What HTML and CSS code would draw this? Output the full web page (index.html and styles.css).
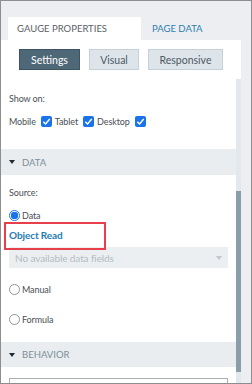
FILE: index.html
```html
<!DOCTYPE html>
<html lang="en">
<head>
    <meta charset="UTF-8">
    <link rel="stylesheet" href="styles.css">
</head>
<body>

<div class="frame">
    <!-- Pestañas -->
    <div class="tabs">
        <div class="tab active">Gauge Properties</div>
        <div class="tab">Page Data</div>
    </div>

    <div class="panel">
        <div class="button-row">
            <button class="seg selected">Settings</button>
            <button class="seg">Visual</button>
            <button class="seg">Responsive</button>
        </div>

        <div class="scroll-area">
            <div class="content">
                <div class="block show-on">
                    <p class="label">Show on:</p>
                    <div class="check-row">
                        <span>Mobile</span>
                        <span class="checkbox"><svg viewBox="0 0 12 12"><polyline points="2.5 6.2 5 8.7 9.5 3.3" fill="none" stroke="#fff" stroke-width="1.6"/></svg></span>
                        <span>Tablet</span>
                        <span class="checkbox"><svg viewBox="0 0 12 12"><polyline points="2.5 6.2 5 8.7 9.5 3.3" fill="none" stroke="#fff" stroke-width="1.6"/></svg></span>
                        <span>Desktop</span>
                        <span class="checkbox"><svg viewBox="0 0 12 12"><polyline points="2.5 6.2 5 8.7 9.5 3.3" fill="none" stroke="#fff" stroke-width="1.6"/></svg></span>
                    </div>
                </div>

                <div class="section-header"><span class="caret"></span>DATA</div>

                <div class="block source">
                    <p class="label">Source:</p>
                    <div class="radio-row data"><span class="radio checked"></span>Data</div>
                    <div class="object-read">Object Read</div>
                    <div class="select">
                        <span>No available data fields</span>
                        <span class="select-caret"></span>
                    </div>
                    <div class="radio-row manual"><span class="radio"></span>Manual</div>
                    <div class="radio-row formula"><span class="radio"></span>Formula</div>
                    <div class="highlight"></div>
                </div>

                <div class="section-header behavior"><span class="caret"></span>BEHAVIOR</div>

                <div class="block">
                    <div class="input-box"></div>
                </div>
            </div>
            <div class="scrollbar"><div class="thumb"></div></div>
        </div>
    </div>
</div>

</body>
</html>
```

FILE: styles.css
```css
/* Estilos generales */
* {
    box-sizing: border-box;
}

body {
    margin: 0;
    font-family: Lato, "Noto Sans", sans-serif;
    color: #4a4f55;
}

.frame {
    width: 252px;
    height: 384px;
    border: 1px solid #8e8e8e;
    background-color: #eceef1;
    padding-top: 16px;
    overflow: hidden;
}

/* Pestañas */
.tabs {
    display: flex;
    padding-left: 7px;
}

.tab {
    height: 23px;
    line-height: 24px;
    padding: 0 11px;
    font-size: 9.5px;
    text-transform: uppercase;
    color: #2f7fae;
}

.tab.active {
    width: 133px;
    padding: 0 9px;
    background: white;
    color: #5b6066;
}

/* Panel */
.panel {
    width: 240px;
    background: white;
}

.button-row {
    display: flex;
    gap: 9px;
    padding: 9px 0 0 18px;
    height: 39px;
}

.seg {
    height: 21px;
    padding: 0;
    border: 1px solid #c6d0d8;
    background-color: #dde4ea;
    color: #4d5a64;
    font-family: inherit;
    font-size: 10.5px;
}

.seg:nth-child(1) { width: 61px; }
.seg:nth-child(2) { width: 50px; }
.seg:nth-child(3) { width: 75px; }

.seg.selected {
    background-color: #4f6878;
    border-color: #3d5362;
    color: white;
}

.scroll-area {
    display: flex;
    height: 306px;
}

.content {
    flex-grow: 1;
}

.scrollbar {
    width: 5px;
    background-color: #e3e8ec;
    padding-top: 112px;
}

.thumb {
    height: 181px;
    background-color: #8b9da8;
}

/* Bloques */
.block {
    padding: 0 8px;
    font-size: 9px;
    letter-spacing: -0.1px;
}

.label {
    margin: 0;
    height: 14px;
    line-height: 14px;
}

.show-on {
    height: 70px;
    padding-top: 13px;
}

.check-row {
    display: flex;
    align-items: center;
    gap: 5px;
    height: 14px;
    margin-top: 8px;
}

.checkbox {
    width: 11px;
    height: 11px;
    border-radius: 2px;
    background-color: #1a73e8;
    margin-right: -2px;
    display: flex;
}

.checkbox svg {
    width: 11px;
    height: 11px;
}

.section-header {
    height: 26px;
    display: flex;
    align-items: center;
    background-color: #e9edf0;
    color: #7d8d99;
    font-size: 9.5px;
    padding-left: 8px;
}

.section-header.behavior {
    height: 25px;
}

.caret {
    width: 0;
    height: 0;
    border-left: 3px solid transparent;
    border-right: 3px solid transparent;
    border-top: 4px solid #1f2a33;
    margin-right: 7px;
}

.source {
    position: relative;
    height: 167px;
    padding-top: 11px;
}

.radio-row {
    display: flex;
    align-items: center;
    gap: 2px;
    height: 14px;
}

.radio-row.data {
    margin-top: 8px;
}

.radio {
    width: 11px;
    height: 11px;
    border-radius: 50%;
    border: 1px solid #8f969c;
    background: white;
}

.radio.checked {
    border-color: #1a73e8;
    background: radial-gradient(circle, #1a73e8 3.5px, white 4px);
}

.object-read {
    margin-top: 5px;
    height: 16px;
    line-height: 16px;
    font-size: 10px;
    font-weight: bold;
    color: #1f7cb1;
}

.select {
    display: flex;
    justify-content: space-between;
    align-items: center;
    height: 21px;
    margin-top: 4px;
    padding: 0 6px;
    background-color: #eceff1;
    color: #b4bcc2;
    font-size: 10px;
}

.select-caret {
    border-left: 3px solid transparent;
    border-right: 3px solid transparent;
    border-top: 4px solid #c1c7cc;
}

.manual {
    margin-top: 14px;
}

.formula {
    margin-top: 16px;
}

/* Recuadro rojo de anotación */
.highlight {
    position: absolute;
    left: 3px;
    top: 47px;
    width: 102px;
    height: 28px;
    border: 2px solid #e8404a;
}

.input-box {
    margin-top: 11px;
    height: 20px;
    border: 1px solid #a9b1b7;
}
```
